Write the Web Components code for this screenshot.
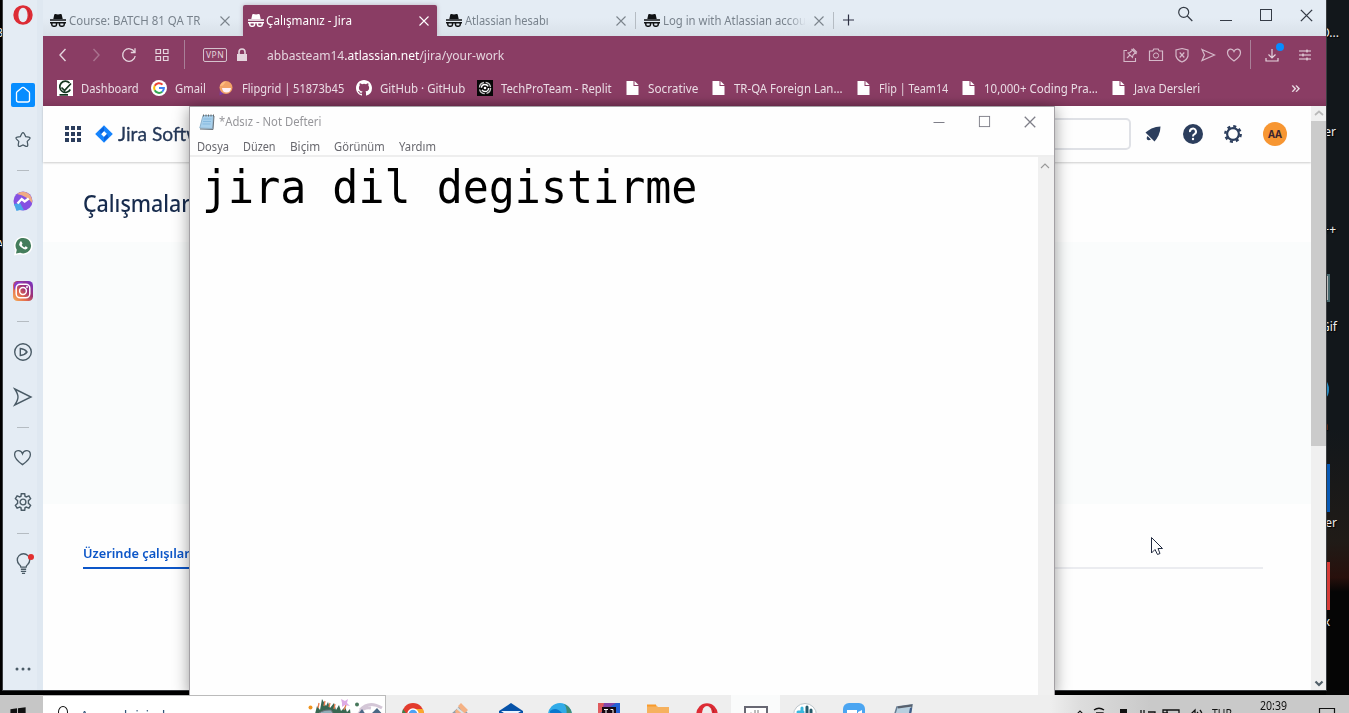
<!DOCTYPE html>
<html lang="tr">
<head>
<meta charset="utf-8">
<title>Çalışmanız - Jira</title>
<style>
html,body{margin:0;height:100%;overflow:hidden;background:#000}
body{font-family:"Noto Sans","Open Sans",sans-serif}
</style>
</head>
<body>
<desk-top></desk-top>
<script>
const define=(name,html,after)=>customElements.define(name,class extends HTMLElement{
  constructor(){super();const t=document.createElement('template');t.innerHTML=html;this.attachShadow({mode:'open'}).append(t.content.cloneNode(true));}
  connectedCallback(){if(after)after.call(this,this.shadowRoot);}
});

/* Text run fitted to a given advance width; v stretches it vertically */
define('fit-text','<style>:host{display:inline-block;flex:none;white-space:pre;line-height:20px}span{display:inline-block;transform-origin:0 50%}</style><span><slot></slot></span>',function(r){
  const s=r.querySelector('span'),w=+this.getAttribute('w'),v=this.getAttribute('v')||1;
  this.style.width=w+'px';s.style.transform=`scale(${w/s.offsetWidth},${v})`;
});

const P=(d,x='')=>`<path d="${d}" ${x}/>`;
const F='fill="currentColor" stroke="none"';
const opera='<ellipse cx="10" cy="10" rx="9.7" ry="9.8" fill="#dd2c35" stroke="none"/><ellipse cx="10" cy="10" rx="4.6" ry="7.3" fill="var(--hole,#e4ecf4)" stroke="none"/><path d="M13 2.8c3 2 3.7 4.5 3.7 7.2s-1 5.400-3.700 7.200a9.800 9.800 0 0 0 0-14.400" fill="#a81f2a" stroke="none"/>';
const icons={
 opera:[20,opera],
 spy:[16,P('M3.300 6 4.300 1.400Q4.600.7 5.400 1l2.600.5L10.600 1Q11.400.7 11.700 1.400L12.700 6ZM0 6.300h16v1.400H0z',F)+P('M1.800 9.700h4.700v2.100q0 1.400-1.500 1.400H3.400q-1.600 0-1.600-1.400zM9.500 9.700h4.700v2.100q0 1.400-1.600 1.400H11q-1.500 0-1.500-1.400zM0 9.700h16','stroke-width="1.5"')],
 x:[12,P('M1.500 1.500l9 9M10.500 1.500l-9 9','stroke-width="1.1"')],
 plus:[12,P('M6.500 .5v11M1 6h11','stroke-width="1.200"')],
 search:[16,'<circle cx="6.700" cy="6.300" r="5" stroke-width="1.200"/>'+P('M10.300 10l5 5','stroke-width="1.200"')],
 min:[14,P('M1 12.500h12')],
 mid:[14,P('M1.500 7.500h11')],
 max:[14,'<rect x="1.500" y="1.500" width="11" height="11"/>'],
 back:[16,P('M10.500 2 5 8l5.500 6','stroke-width="1.4"')],
 fwd:[16,P('M5.500 2 11 8l-5.500 6','stroke-width="1.400"')],
 reload:[16,P('M13.500 5A6.300 6.300 0 1 0 14.200 9M14 1.200V5.500H9.800','stroke-width="1.300"')],
 speed:[16,P('M2 2.500h4.500v4H2zM9.500 2.500H14v4H9.500zM2 9.500h4.500v4H2zM9.500 9.500H14v4H9.500z','stroke-width="1.200"')],
 lock:[14,P('M2 6h10v7H2z',F)+P('M4 6V4a3 3 0 0 1 6 0v2','stroke-width="1.600"')],
 pin:[16,P('M5 3.500H2v11h11.500V11M5 11l3-3M9.500 2l5 5M10.500 3 8 5.500l-2 .5 4.500 4.500.500-2.500 2.500-2.500M11 1.500 15 5.500','stroke-width="1.100"')],
 camera:[16,P('M1.500 4h3.300l1-2h4.400l1 2h3.300v9.500h-13z','stroke-width="1.200"')+'<circle cx="8" cy="8.500" r="2.600"/>'],
 shield:[16,P('M8 1.500 14 3v6q-1 4-6 6-5-2-6-6V3zM5.700 5.500l4.600 5M10.300 5.500l-4.600 5','stroke-width="1.200"')],
 send:[16,P('M2 2.500 14.500 8 2 13.500 4.500 8z','stroke-width="1.200"')],
 heart:[16,P('M8 14Q1.500 9.500 1.500 5.700C1.500 1.500 6.500 1 8 4.500 9.500 1 14.500 1.500 14.500 5.700 14.500 9.500 8 14 8 14z','stroke-width="1.200"')],
 download:[16,P('M8 2v8.500M4.500 7.500 8 11l3.500-3.500M2 11v3h12v-3','stroke-width="1.200"')],
 sliders:[14,P('M1 3h12M1 7h12M1 11h12M9 1.500v3M5 5.500v3M9 9.500v3','stroke-width="1.200"')],
 check:[16,'<rect width="16" height="16" fill="#fff" stroke="none"/>'+P('M12.500 3A5.600 5.600 0 1 0 13.300 9.500M4.500 7.500l3 3L14 3.500M2.500 14.800H11','stroke="#14351f" stroke-width="1.700"')],
 google:[16,'<circle cx="8" cy="8" r="8" fill="#fff" stroke="none"/><g stroke-width="2">'+P('M11.500 4.600A4.900 4.900 0 0 0 3.700 5.700','stroke="#ea4335"')+P('M3.700 5.700a4.900 4.900 0 0 0 0 4.600','stroke="#fbbc05"')+P('M3.700 10.300a4.900 4.900 0 0 0 7.500 1.400','stroke="#34a853"')+P('M11.200 11.700A4.800 4.800 0 0 0 12.900 8H8','stroke="#4285f4"')+'</g>'],
 flip:[16,P('M2 9.500 1.500 15.500 7 13z','fill="#7d3dab" stroke="none"')+'<circle cx="8" cy="7.500" r="6.500" fill="#f2a267" stroke="none"/>'+P('M4 8h9q-.5 4.500-4.500 4.500T4 8z','fill="#fff1f6" stroke="none"')+P('M2 6q2-5 6-4.500l-3 4z','fill="#ffbd80" stroke="none"')],
 github:[16,P('M8 0C3.580 0 0 3.580 0 8c0 3.540 2.290 6.530 5.470 7.590.4.070.550-.170.550-.380 0-.190-.010-.820-.010-1.490-2.010.370-2.530-.490-2.690-.940-.090-.230-.480-.940-.820-1.130-.280-.150-.680-.520-.010-.530.630-.010 1.080.580 1.230.820.720 1.210 1.870.870 2.330.660.070-.520.280-.870.510-1.070-1.780-.2-3.640-.890-3.640-3.950 0-.870.310-1.590.820-2.150-.080-.2-.360-1.020.080-2.120 0 0 .670-.210 2.200.820a7.700 7.700 0 0 1 4 0c1.530-1.040 2.200-.820 2.200-.820.440 1.100.160 1.920.080 2.120.510.560.820 1.270.820 2.150 0 3.070-1.870 3.750-3.650 3.950.290.250.540.730.540 1.480 0 1.070-.010 1.930-.010 2.200 0 .210.150.460.550.380A8 8 0 0 0 16 8c0-4.420-3.580-8-8-8',F)],
 replit:[16,'<rect width="16" height="16" fill="#080808" stroke="none"/><circle cx="8" cy="8" r="5.600" stroke="#c9c9c9" stroke-width="1.300" stroke-dasharray="7 1.800"/><circle cx="8" cy="8" r="3.600" stroke="#fff" stroke-width="1.500" stroke-dasharray="9 2.300"/><circle cx="8" cy="8" r="1.300" fill="#fff" stroke="none"/>'],
 file:[16,P('M2.500 1H9.500V6h5v9h-12z',F)+P('M10.500 1l4 4h-4z',F)],
 home:[20,P('M3.500 8Q3.500 7.300 4.100 6.800L9.200 2.600Q10 2 10.800 2.600l5.100 4.200q.6.500.6 1.200V15q0 2-2 2h-9q-2 0-2-2z','stroke-width="1.300"')],
 star:[20,P('M8.700 2.800Q10 1 11.300 2.800L13 6.200 16.500 6.700Q18.700 7.200 17.200 9L14.700 11.500 15.300 15.500Q15.300 17.700 13.300 17L10 15.600 6.700 17Q4.700 17.700 4.700 15.500L5.300 11.500 2.800 9Q1.300 7.200 3.500 6.700L7 6.200z','stroke-width="1.400"')],
 messenger:[20,'<circle cx="10" cy="10" r="9.500" fill="#8551e2" stroke="none"/>'+P('M4 3Q10-1.500 16 3 20 7 19 12 14 5 4 3z','fill="#efab83" stroke="none"')+P('M1 13l6-1 4 7.300-4-.3-3.500 1z','fill="#4aa7e8" stroke="none"')+P('M4.500 12.500 8.700 8l3 2.500 4-3','stroke="#fff" stroke-width="2.300"')],
 whatsapp:[20,P('M2 18.500 3 14A8.500 8.500 0 1 1 7 17.500z','fill="#447d5c" stroke="#fff" stroke-width="1.500"')+P('M7 6q1-1.500 2 .500l.5 1.200-.8 1.300q1 1.800 2.800 2.500l1-1.200 2 1q.5 1.400-1.500 2-1.500.5-4.500-1.800T6.300 8z','fill="#fff" stroke="none"')],
 instagram:[20,'<defs><linearGradient id="g" x1="0" y1="1" x2="1" y2="0"><stop stop-color="#f8b45b"/><stop offset=".35" stop-color="#e26b4d"/><stop offset=".6" stop-color="#9e3275"/><stop offset="1" stop-color="#7434ce"/></linearGradient></defs><rect width="20" height="20" rx="4.500" fill="url(#g)" stroke="none"/>'+P('M1 9V5Q1 1 5 .8h6L5 5z','fill="#8a3cc6" stroke="none"')+'<g stroke="#fff" stroke-width="1.500"><rect x="3.200" y="3.200" width="13.600" height="13.600" rx="4"/><circle cx="10" cy="10" r="3.400"/></g><circle cx="14" cy="6" r="1" fill="#fff" stroke="none"/>'],
 play:[20,'<circle cx="10" cy="10" r="8.300" stroke-width="1.400"/>'+P('M7.300 6.500V13.500Q12 13 14 10 12 7 7.300 6.500z','stroke-width="1.400"')],
 plane:[20,P('M1.800 2 18 10 1.800 18Q5 13 5 10T1.800 2z','stroke-width="1.400"')],
 bheart:[20,P('M10 17.500Q1.700 11.500 1.700 7C1.700 1.500 8.500 1.500 10 6 11.500 1.500 18.300 1.500 18.300 7 18.300 11.500 10 17.500 10 17.500z','stroke-width="1.400"')],
 cog:[20,P('M8 4.200 8.300 1.700h3.400L12 4.200l1.200.7 2.700-1.100 1.700 2.900-2.200 1.900v2.800l2.200 1.900-1.700 2.900-2.700-1.100-1.200.7-.3 2.500H8.300L8 15.800l-1.200-.7-2.700 1.100-1.700-2.900 2.200-1.900V8.600L2.400 6.700l1.700-2.900 2.700 1.100z','stroke-width="1.400"')+'<circle cx="10" cy="10" r="2.900" stroke-width="1.400"/>'],
 bulb:[20,P('M7.500 12.500Q7.500 11.200 6 10a5.900 5.900 0 1 1 8 0Q12.500 11.200 12.500 12.500zM7.500 14.500h5M7.500 16.500h5M8.500 18.500h3','stroke-width="1.300"')],
 dots:[20,'<g fill="currentColor" stroke="none"><circle cx="4" cy="10" r="1.500"/><circle cx="10" cy="10" r="1.500"/><circle cx="16" cy="10" r="1.500"/></g>'],
 apps:[16,P('M0 0h4v4H0zM6 0h4v4H6zM12 0h4v4h-4zM0 6h4v4H0zM6 6h4v4H6zM12 6h4v4h-4zM0 12h4v4H0zM6 12h4v4H6zM12 12h4v4h-4z',F)],
 jira:[18,P('M9 .2 17.800 9 9 17.800.2 9z','fill="#1684fd" stroke="none"')+P('M9 6 12 9 9 12 6 9z','fill="#fff" stroke="none"')+P('M6 9 9 6 9 2 4.500 5.500zM12 9 9 12v4l4.500-3.500z','fill="#0b63dd" stroke="none"')],
 bell:[20,P('M2.500 8.500Q5 6.300 8.500 4.500 13 2.500 17.500 2.500 17.500 7 15.500 11.500 13.700 15 11.500 17.500zM4.500 12 8 15.500Q5.500 17 4 15.500 3 14 4.500 12z',F)],
 help:[20,'<circle cx="10" cy="10" r="10" fill="currentColor" stroke="none"/>'+P('M7 8A3 3 0 1 1 11.500 10.200Q10 11 10 12.500','stroke="#fff" stroke-width="2"')+'<circle cx="10" cy="15" r="1.200" fill="#fff" stroke="none"/>'],
 gear:[20,'<circle cx="10" cy="10" r="5.900" stroke-width="2.200"/><circle cx="10" cy="10" r="7.700" stroke-width="2.400" stroke-dasharray="3.030 3.018"/>'],
 up:[12,P('M2 8 6 4.500 10 8','stroke-width="1.700"')],
 down:[12,P('M2.500 4.500 6 8 9.500 4.500','stroke-width="2.200"')],
 thin:[12,P('M2 8 6 4 10 8','stroke-width="1.100"')],
 notepad:[18,P('M5 2.500H15.500L14.500 15.500 1.800 15z','fill="#a8d0ec" stroke="#8fb3cc"')+P('M16 3 15 16.500 2 16','stroke="#6a747c"')+P('M5.500 6h8M5 8.500h8M4.500 11h8','stroke="#86b9de"')+P('M5.500 1.500v2M8 1.500v2M10.500 1.500v2M13 1.500v2M15.500 1.500v2','stroke="#666"')],
 win:[20,P('M1.500 4.500 8.500 3.500V20H1.500zM9.500 3.400 17.500 2.300V20H9.500z',F)],
 chrome:[22,'<circle cx="11" cy="11" r="11" fill="#e33b2d" stroke="none"/>'+P('M11 6H21Q24 14 17 22H11z','fill="#fba72b" stroke="none"')+P('M1 6 7 14v8Q-2 16 1 6z','fill="#358450" stroke="none"')+'<circle cx="11" cy="11" r="5" fill="#4da2f6" stroke="#fff" stroke-width="1.500"/>'],
 pens:[22,P('M0 11 10 2 20 14H0z','fill="#8d9eab" stroke="none"')+P('M7 3 10 0 17 7 13 11zM4 8l3-3 6 6H5z','fill="#f4b184" stroke="none"')+P('M6 5l8 7','stroke="#dce3e8" stroke-width="2"')],
 mail:[24,P('M0 8 12 0 24 8V20H0z','fill="#0753a9" stroke="none"')+P('M2 8H22L12 15z','fill="#e9f3ff" stroke="none"')],
 edge:[24,'<circle cx="12" cy="12" r="12" fill="#31abe8" stroke="none"/>'+P('M2 8Q8 3 14 10L18 24H3z','fill="#0877ce" stroke="none"')+P('M16 1Q24 4 24 13h-6Q20 5 16 1z','fill="#438d73" stroke="none"')],
 ij:[22,'<rect width="22" height="22" fill="#2361d5" stroke="none"/>'+P('M0 0h16L0 12z','fill="#e05b5e" stroke="none"')+P('M6 0h12L4 9z','fill="#8447a9" stroke="none"')+'<rect x="4" y="4" width="14" height="16" fill="#160a14" stroke="none"/>'+P('M6 6.500h4M8 6.500v7M12.500 6.500H15v5','stroke="#fff"')],
 folder:[22,P('M0 2h9l2 2h11v18H0z','fill="#f6b15e" stroke="none"')+P('M0 1.500h9v2H0z','fill="#f99b2b" stroke="none"')],
 board:[24,'<rect x="1" y="4" width="22" height="20" fill="#fff" stroke="#686873" stroke-width="2"/>'+P('M11 7v5M14 7v5M7 9.500v5','stroke="#777"')],
 slack:[24,'<circle cx="12" cy="12" r="11.500" fill="#fff" stroke="#bcc5ca"/>'+P('M9 5v7M5 9h5','stroke="#39b8df" stroke-width="3" stroke-linecap="round"')+P('M14 4v7M18 7v5','stroke="#245a6b" stroke-width="3" stroke-linecap="round"')],
 zoom:[22,'<rect width="22" height="22" rx="6" fill="#4ba5f1" stroke="none"/>'+P('M4 7h10v8H4zM15 9l4-2v8l-4-2z','fill="#fff" stroke="none"')],
 pad:[22,P('M5 4 20 2 17 20H0z','fill="#b7cfdf" stroke="#687d92" stroke-width="1.500"')+P('M6 4.500 20 2.500','stroke="#59606c" stroke-width="2"')+P('M19 5 16 20','stroke="#3e5d8c" stroke-width="2"')],
 sketch:[76,P('M5 20 8 8l3 4 2-11 4 7 2-4 2 6 4-5 2 7 3-5 2 6 4-4 2 5 3-3 1 9z','fill="#386751" stroke="none"')+P('M9 10l1-5M15 8l1-5M20 9l1-4M25 11l1-5M35 12l2-5','stroke="#e97e50" stroke-width="1.300"')+P('M6 20Q11 11 22 12l6 9z','fill="#90aeb8" stroke="#6d6e77"')+P('M32 1l4 2 3-2-1 4 3 3-5-1-3 2v-4z','fill="#ddaae4" stroke="none"')+'<circle cx="1.500" cy="9.500" r="2" fill="#ef941f" stroke="none"/><circle cx="48" cy="6.500" r="2" fill="#48785c" stroke="none"/>'+P('M48 20Q52 8 62 10M51 12Q60 2 73 10','stroke="#d4c7d7" stroke-width="3"')+P('M62 16l6-6 7 8zM47 19l6-8 6 9z','fill="#4b6885" stroke="none"')],
 wifi:[18,P('M4 4Q9 .5 14 4M6 7h7l2 4v4H5V9','stroke-width="1.500"')],
 usb:[18,P('M6 3h7v15H6z',F)],
 plug:[18,P('M3 4v4M6 4v4M1 8h7v4M10 6h7v8h-7','stroke-width="1.300"')],
 batt:[18,P('M1 4h16v10H1zM1 7h5M5 4v8','stroke-width="1.300"')],
 vol:[18,P('M1 8h4l4-4v12M11 6q3 3 0 7M14 4q4 5 0 10','stroke-width="1.300"')],
 note:[18,P('M1.500 2.500h15v12h-15z','stroke-width="1.200"')]
};
define('ui-icon','<style>:host{display:block;flex:none}svg{display:block;overflow:visible}</style><div></div>',function(r){
  const [v,m]=icons[this.getAttribute('n')],s=this.getAttribute('s')||v;
  r.querySelector('div').innerHTML=`<svg width="${s}" height="${s}" viewBox="0 0 ${v} ${v}" fill="none" stroke="currentColor">${m}</svg>`;
});

define('browser-tab',`<style>
:host{display:flex;align-items:center;box-sizing:border-box;width:198px;height:31px;padding:0 9px 0 8px;color:#101214;font-size:12.500px}
.t{margin-left:3px;color:#78828c}.c{margin-left:auto;color:#7b848c}
:host([active]){width:194px;padding:0 7px 0 5px;background:#8a3d64;color:#fff;border-radius:2px 2px 0 0;box-shadow:0 0 4px #7a506a60}
:host([active]) .t{margin-left:2px}
:host([active]) .t,:host([active]) .c{color:#fff}
:host([fade]) .t{-webkit-mask:linear-gradient(90deg,#000 87%,transparent)}
</style><ui-icon n="spy"></ui-icon><div class="t"><slot></slot></div><ui-icon class="c" n="x"></ui-icon>`);

define('tab-strip',`<style>
:host{display:flex;height:31px;padding-top:5px;background:linear-gradient(#e4ecf4 50%,#d9e1e9)}
browser-tab:first-of-type{width:200px;padding-left:7px;padding-right:12px}
.v{height:17px;width:1px;margin:7px 0 0 -1px;background:#b5bcc3}.p{margin:9px 0 0 8px;color:#2c2f42}
.w{display:flex;margin-left:auto;padding:3px 12px 0 0;color:#353c46}.w ui-icon+ui-icon{margin-left:26px}
</style><browser-tab><fit-text w="131">Course: BATCH 81 QA TR</fit-text></browser-tab><browser-tab active><fit-text w="86">Çalışmanız - Jira</fit-text></browser-tab><browser-tab style="padding-left:9px;width:199px" ><fit-text w="84">Atlassian hesabı</fit-text></browser-tab><div class="v"></div><browser-tab fade><fit-text w="143">Log in with Atlassian accou</fit-text></browser-tab><div class="v"></div><ui-icon class="p" n="plus"></ui-icon>
<div class="w"><ui-icon n="search" style="margin:-2px 0 0"></ui-icon><ui-icon n="min"></ui-icon><ui-icon n="max"></ui-icon><ui-icon n="x" s="15"></ui-icon></div>`);

define('tool-bar',`<style>
:host{display:flex;align-items:center;height:37px;padding:0 14px 0 12px;background:#8a3d64;color:#e5d5de;font-size:13px}
.n,.r{display:flex;align-items:center}.n{gap:17px}.r{gap:10px;margin-left:auto;color:#d5b9c9}
.d{width:1px;height:29px;background:#a98098}
.vpn{box-sizing:border-box;width:24px;height:14px;border:1px solid #d5c2cd;border-radius:2px;margin:0 8px 0 18px;display:flex;justify-content:center;align-items:center;font-size:8.500px;letter-spacing:.5px}
.dl{position:relative;margin-left:13px}.dl i{position:absolute;width:8px;height:8px;border-radius:50%;background:#078cff;left:12px;top:-4px}
b{font-weight:400;color:#fff}
</style><div class="n"><ui-icon n="back"></ui-icon><ui-icon n="fwd" style="opacity:.35"></ui-icon><ui-icon n="reload"></ui-icon><ui-icon n="speed"></ui-icon></div><div class="d" style="margin-left:14px"></div><div class="vpn">VPN</div><ui-icon n="lock"></ui-icon><fit-text w="237" style="margin-left:18px">abbasteam14<b>.atlassian.net</b>/jira/your-work</fit-text>
<div class="r"><ui-icon n="pin"></ui-icon><ui-icon n="camera"></ui-icon><ui-icon n="shield"></ui-icon><ui-icon n="send"></ui-icon><ui-icon n="heart"></ui-icon></div><div class="d" style="margin-left:8px"></div><div class="dl"><ui-icon n="download"></ui-icon><i></i></div><ui-icon n="sliders" style="margin-left:18px;color:#eadbe3"></ui-icon>`);

define('book-mark','<style>:host{display:flex;gap:8px;align-items:center}</style><slot name="i"></slot><slot></slot>');
const bm=(i,w,t)=>`<book-mark><ui-icon slot="i" n="${i}"></ui-icon><fit-text w="${w}">${t}</fit-text></book-mark>`;
define('bookmark-bar',`<style>:host{display:flex;box-sizing:border-box;height:33px;padding:0 25px 3px 14px;gap:12px;align-items:center;font-size:12.700px;color:#eee3e9;background:linear-gradient(#8a3d64 75%,#7d365a)}book-mark{color:#fff}fit-text{color:#eadde5}.m{margin-left:auto;font-size:17px;margin-top:-3px}</style>`+
bm('check',58,'Dashboard')+bm('google',31,'Gmail')+bm('flip',102,'Flipgrid | 51873b45')+bm('github',85,'GitHub · GitHub')+bm('replit',111,'TechProTeam - Replit')+bm('file',50,'Socrative')+bm('file',109,'TR-QA Foreign Lan...')+bm('file',69,'Flip | Team14')+bm('file',114,'10,000+ Coding Pra...')+bm('file',66,'Java Dersleri')+'<fit-text class="m" w="10">»</fit-text>');

define('side-bar',`<style>
:host{display:flex;flex-direction:column;align-items:center;box-sizing:border-box;width:40px;padding-top:5px;background:linear-gradient(90deg,#e4ecf4 34px,#dfe8f1 34px);color:#4a5b66}
.home{width:24px;height:24px;display:flex;align-items:center;justify-content:center;background:#078dff;color:#fff;border-radius:2px;margin:58px 0 24px}
hr{width:12px;height:1px;border:0;background:#b5bcc2;margin:0;flex:none}
.b{position:relative}.b i{position:absolute;width:6px;height:6px;border-radius:50%;background:#e22f2f;right:0;top:0}
</style><ui-icon n="opera"></ui-icon><div class="home"><ui-icon n="home"></ui-icon></div>
<ui-icon n="star" s="18" style="margin:0 0 21px"></ui-icon><hr><ui-icon n="messenger" style="margin:20px 0 25px"></ui-icon><ui-icon n="whatsapp"></ui-icon><ui-icon n="instagram" style="margin:25px 0 20px"></ui-icon><hr>
<ui-icon n="play" style="margin:20px 1px 25px 0"></ui-icon><ui-icon n="plane" style="margin-right:1px"></ui-icon><hr style="margin:20px 0"><ui-icon n="bheart" s="19" style="margin-right:1px"></ui-icon><ui-icon n="cog" style="margin:25px 1px 21px 0"></ui-icon><hr><div class="b" style="margin:20px 0 0"><ui-icon n="bulb" s="21"></ui-icon><i></i></div><ui-icon n="dots" style="margin-top:84px"></ui-icon>`);

define('scroll-bar',`<style>:host{display:flex;flex-direction:column;align-items:center;width:15px;background:#f0f0f0;color:#b9b9b9}div{width:15px;height:325px;background:#cbcbcb;margin-top:2px}.u{margin-top:1px}.d{margin:auto 0 1px;color:#53616a}</style><ui-icon class="u" n="up"></ui-icon><div></div><ui-icon class="d" n="down"></ui-icon>`);

define('jira-page',`<style>
:host{display:flex;flex-direction:column;flex:1;background:#fefefe;color:#172b4d}
header{display:flex;align-items:center;height:56px;padding:0 24px 0 22px;box-shadow:0 1px 2px #0003;color:#2c3e5d}
.logo{margin-left:14px}.name{font:400 19px/20px Lato,sans-serif;margin:-1px 0 0 5px;color:#253858;-webkit-text-stroke:.3px #253858}
.s{margin-left:auto;width:160px;height:28px;border:2px solid #dfe1e6;border-radius:5px}
.av{width:24px;height:24px;border-radius:50%;background:#f79632;color:#3b2530;font:700 10px/24px "Noto Sans",sans-serif;text-align:center;margin-left:20px}
header ui-icon.k{margin-left:20px}
h1{font-size:23px;font-weight:500;margin:0;height:58px;padding:22px 0 0 40px;line-height:38px}
h1 fit-text{line-height:38px}
.band{height:262px;background:#fafcfc}
nav{margin:37px 48px 0 40px;border-bottom:2px solid #ebecf0;display:flex;height:26px}
nav div{border-bottom:2px solid #0c56c8;color:#0c56c8;font-size:13px;font-weight:600;width:130px;height:24px;padding-top:2px}
</style><header><ui-icon n="apps"></ui-icon><ui-icon class="logo" n="jira"></ui-icon><fit-text class="name" w="83">Jira Softw</fit-text><div class="s"></div><ui-icon n="bell" style="margin-left:12px"></ui-icon><ui-icon class="k" n="help"></ui-icon><ui-icon class="k" n="gear"></ui-icon><div class="av">AA</div></header>
<h1><fit-text w="107">Çalışmalar</fit-text></h1><div class="band"></div><nav><div><fit-text w="107">Üzerinde çalışılar</fit-text></div></nav>`);

define('browser-window',`<style>:host{display:flex;background:#e4ecf4;outline:1px solid #3a3d40}main{flex:1;display:flex;flex-direction:column;min-width:0}section{flex:1;display:flex}</style><side-bar></side-bar><main><tab-strip></tab-strip><tool-bar></tool-bar><bookmark-bar></bookmark-bar><section><jira-page></jira-page><scroll-bar></scroll-bar></section></main>`);

define('note-pad',`<style>
:host{display:flex;flex-direction:column;box-sizing:border-box;background:#fefefe;border:1px solid #a3a0a4;border-bottom:0;box-shadow:0 2px 15px #0006;color:#96969a;font-size:12.500px}
.t{display:flex;align-items:center;height:29px;padding:0 17px 0 8px}.c{display:flex;gap:32px;margin-left:auto;color:#7e7e88}
.m{display:flex;gap:14px;height:19px;padding-left:7px;color:#68686e;border-bottom:2px solid #eee}.m fit-text{margin-top:1px}
.b{flex:1;display:flex}.b pre{flex:1;margin:0;padding:0 0 0 12px;color:#000;font:43.400px/60px "DejaVu Sans Mono",monospace}
.b fit-text{line-height:60px}
.s{width:16px;background:#f0f0f0;color:#999;padding-top:3px}.s ui-icon{margin-left:1px}
</style><div class="t"><ui-icon n="notepad"></ui-icon><fit-text w="102" style="margin-left:3px">*Adsız - Not Defteri</fit-text><div class="c"><ui-icon n="mid"></ui-icon><ui-icon n="max" s="13"></ui-icon><ui-icon n="x" s="14"></ui-icon></div></div>
<div class="m"><fit-text w="32">Dosya</fit-text><fit-text w="33">Düzen</fit-text><fit-text w="30">Biçim</fit-text><fit-text w="51">Görünüm</fit-text><fit-text w="37">Yardım</fit-text></div><div class="b"><pre><fit-text w="495" v="1.070">jira dil degistirme</fit-text></pre><div class="s"><ui-icon n="thin"></ui-icon></div></div>`);

define('task-bar',`<style>
:host{display:flex;overflow:hidden;background:linear-gradient(90deg,#eee 1050px,#ddd 1080px,#c9c9c9 1150px);color:#111;font-size:12px}
.st{width:43px;background:#c6c6c6;padding:10px 0 0 9px;box-sizing:border-box}
.se{box-sizing:border-box;width:343px;border:1px solid #bbb;border-width:1px 1px 0 0;background:#fff;display:flex;padding-left:15px;color:#32557a;font-size:13px}
.q{width:10px;height:10px;border:1.500px solid #111;border-radius:50%;margin-top:10px}
.a{display:flex}.a div{width:49px;height:18px;display:flex;justify-content:center;padding-top:8px;box-sizing:border-box;flex:none}
.a .on{background:#fafbfb}
.r{display:flex;margin-left:auto;gap:6px;padding-right:13px}.r ui-icon{margin-top:11px}
</style><div class="st"><ui-icon n="win" s="19"></ui-icon></div><div class="se"><div class="q"></div><fit-text w="166" style="margin:9px 0 0 12px">Aramak için buraya yazın</fit-text><ui-icon n="sketch" style="margin:2px 0 0 63px"></ui-icon></div>
<div class="a" style="padding-left:2px">${['chrome','pens','mail','edge','ij','folder','opera','board','slack','zoom','pad'].map(n=>`<div ${n=='board'?'class="on"':''} style="--hole:#eee"><ui-icon n="${n}" ${n=='opera'?'s="22"':''}></ui-icon></div>`).join('')}</div>
<div class="r"><ui-icon n="thin" s="12" style="margin:12px -2px 0 0"></ui-icon><ui-icon n="wifi"></ui-icon><ui-icon n="usb"></ui-icon><ui-icon n="plug"></ui-icon><ui-icon n="batt"></ui-icon><ui-icon n="vol" style="margin-right:2px"></ui-icon><fit-text w="20" style="margin:9px 0 0">TUR</fit-text><fit-text w="27" style="margin:1px 0 0 22px;font-size:12.500px">20:39</fit-text><ui-icon n="note" style="margin-left:25px"></ui-icon></div>`);

const lab=(r,y,t)=>`<span style="right:${1349-r}px;top:${y-8}px">${t}</span>`;
const ic=(y,h,c,x='')=>`<i style="top:${y}px;height:${h}px;background:${c};${x}"></i>`;
define('desk-top',`<style>
:host{display:block;position:relative;width:1349px;height:713px;overflow:hidden;background:linear-gradient(90deg,#000 1326px,transparent 0),linear-gradient(#12171b 60%,#201b17 76%,#28100c 81%,#050505 83%)}
span{position:absolute;font-size:12px;line-height:16px;color:#eee;text-shadow:1px 1px 1px #000}
i{position:absolute;left:1290px;width:40px}
browser-window{position:absolute;left:3px;top:0;width:1323px;height:690px}
note-pad{position:absolute;left:189px;top:106px;width:866px;height:589px}
task-bar{position:absolute;left:0;top:695px;width:1349px;height:18px}
svg{position:absolute;left:1150px;top:536px}
</style>${lab(3,33,'3')+lab(4,245,'A')+lab(1339,33,'O...')+lab(1336,132,'er')+lab(1336,230,'++')+lab(1337,327,'Gif')+lab(1328,426,'n')+lab(1337,523,'er')+lab(1330,622,'x')+ic(274,28,'#bbb','box-sizing:border-box;border:2px solid #47676c')+ic(377,25,'#2789be','border-radius:12px;width:39px')+ic(464,48,'#0859b4')+ic(562,48,'#d63b36')}
<browser-window></browser-window><svg width="14" height="20"><path d="M1.500 1.500V17L5 13.500 7.500 18.500 10 17.500 8 12.500H12.500z" fill="#fff" stroke="#222b40"/></svg><note-pad></note-pad><task-bar></task-bar>`);
</script>
</body>
</html>
